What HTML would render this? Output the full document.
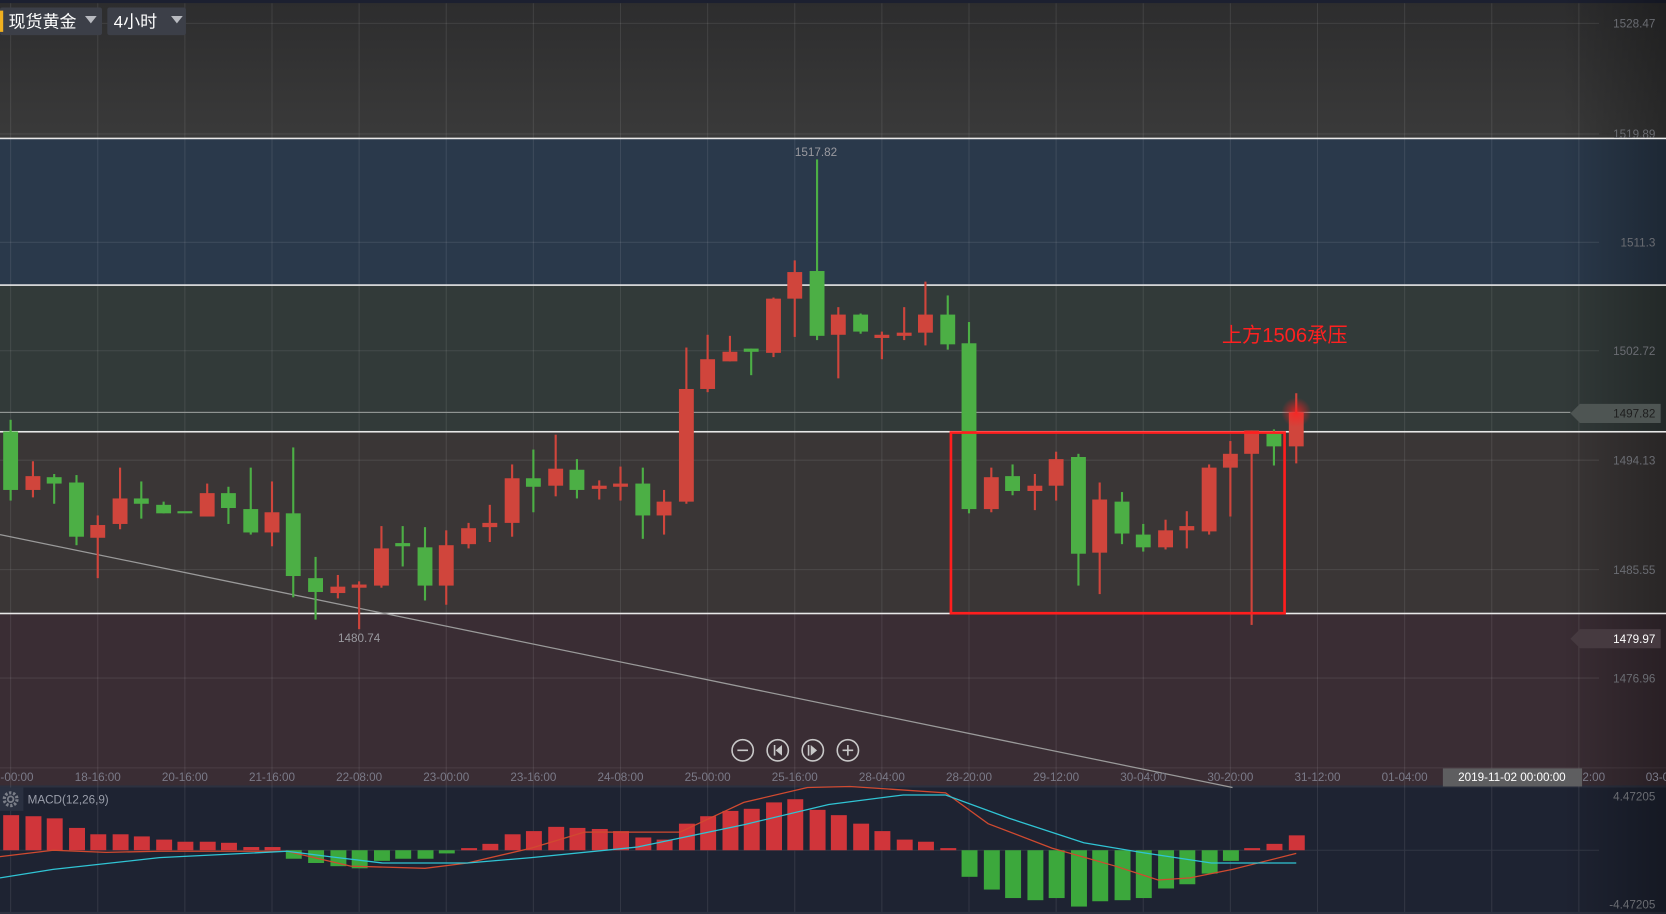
<!DOCTYPE html>
<html><head><meta charset="utf-8"><style>
html,body{margin:0;padding:0;background:#2c2c2c;width:1666px;height:914px;overflow:hidden}
svg{display:block}
text{font-family:"Liberation Sans","Noto Sans CJK SC",sans-serif}
</style></head><body>
<svg width="1666" height="914" viewBox="0 0 1568 860" preserveAspectRatio="none" xmlns="http://www.w3.org/2000/svg">
<defs>
<linearGradient id="topg" x1="0" y1="0" x2="0" y2="1"><stop offset="0" stop-color="#2d2d2e"/><stop offset="1" stop-color="#3a3a3a"/></linearGradient>
<linearGradient id="rdark" x1="0" y1="0" x2="1" y2="0"><stop offset="0" stop-color="#000" stop-opacity="0"/><stop offset="1" stop-color="#000" stop-opacity="0.3"/></linearGradient>
<radialGradient id="glow"><stop offset="0" stop-color="#ff2020" stop-opacity="0.8"/><stop offset="1" stop-color="#ff2020" stop-opacity="0"/></radialGradient>
</defs>
<rect x="0" y="0" width="1568" height="3" fill="#1c2030"/>
<rect x="0" y="3" width="1568" height="127" fill="url(#topg)"/>
<rect x="0" y="130" width="1568" height="138" fill="#2a394b"/>
<rect x="0" y="268" width="1568" height="138" fill="#323a39"/>
<rect x="0" y="406" width="1568" height="171" fill="#3a3636"/>
<rect x="0" y="577" width="1568" height="163" fill="#3a2d34"/>
<rect x="0" y="740" width="1568" height="120" fill="#1e2332"/>
<rect x="0" y="722" width="1568" height="1" fill="#4a3c44"/>
<rect x="0" y="739" width="1568" height="2" fill="#2c3140"/>
<rect x="0" y="858" width="1568" height="2" fill="#2c3140"/>
<rect x="1470" y="0" width="98" height="860" fill="url(#rdark)"/>
<!-- grid -->
<g stroke="#ffffff" stroke-opacity="0.09" stroke-width="1">
<path d="M0 22H1505M0 126H1505M0 228H1505M0 330H1505M0 433H1505M0 536H1505M0 638H1505"/>
<path d="M10 3V740M92 3V740M174 3V740M256 3V740M338 3V740M420 3V740M502 3V740M584 3V740M666 3V740M748 3V740M830 3V740M912 3V740M994 3V740M1076 3V740M1158 3V740M1240 3V740M1322 3V740M1404 3V740M1486 3V740"/>
<path d="M10 740V858M92 740V858M174 740V858M256 740V858M338 740V858M420 740V858M502 740V858M584 740V858M666 740V858M748 740V858M830 740V858M912 740V858M994 740V858M1076 740V858M1158 740V858M1240 740V858M1322 740V858M1404 740V858M1486 740V858M0 800H1505"/>
</g>
<!-- level lines -->
<g fill="#e8e8e8"><rect x="0" y="129.5" width="1568" height="1.5"/><rect x="0" y="267.5" width="1568" height="1.5"/><rect x="0" y="405.5" width="1568" height="1.5"/><rect x="0" y="576.5" width="1568" height="1.5"/></g>
<rect x="0" y="387.5" width="1478" height="1" fill="#9a9e9c"/>
<line x1="0" y1="503" x2="1160" y2="741" stroke="#9a9a9a" stroke-width="1.2"/>
<!-- candles -->
<g id="c">
<g fill="#4caf45">
<rect x="9" y="395" width="2" height="76"/><rect x="3" y="406" width="14" height="55"/>
<rect x="50" y="446" width="2" height="28"/><rect x="44" y="449" width="14" height="6"/>
<rect x="71" y="447" width="2" height="66"/><rect x="65" y="454" width="14" height="51"/>
<rect x="132" y="453" width="2" height="35"/><rect x="126" y="469" width="14" height="5"/>
<rect x="153" y="472" width="2" height="11"/><rect x="147" y="475" width="14" height="8"/>
<rect x="167" y="481" width="14" height="2"/>
<rect x="214" y="458" width="2" height="35"/><rect x="208" y="464" width="14" height="14"/>
<rect x="235" y="440" width="2" height="63"/><rect x="229" y="479" width="14" height="22"/>
<rect x="275" y="421" width="2" height="141"/><rect x="269" y="483" width="14" height="59"/>
<rect x="296" y="524" width="2" height="59"/><rect x="290" y="544" width="14" height="13"/>
<rect x="378" y="495" width="2" height="38"/><rect x="372" y="511" width="14" height="3"/>
<rect x="399" y="496" width="2" height="69"/><rect x="393" y="515" width="14" height="36"/>
<rect x="501" y="423" width="2" height="59"/><rect x="495" y="450" width="14" height="8"/>
<rect x="542" y="432" width="2" height="37"/><rect x="536" y="442" width="14" height="19"/>
<rect x="604" y="440" width="2" height="67"/><rect x="598" y="455" width="14" height="30"/>
<rect x="706" y="328" width="2" height="25"/><rect x="700" y="328" width="14" height="3"/>
<rect x="768" y="150" width="2" height="170"/><rect x="762" y="255" width="14" height="61"/>
<rect x="809" y="295" width="2" height="19"/><rect x="803" y="296" width="14" height="16"/>
<rect x="891" y="278" width="2" height="51"/><rect x="885" y="296" width="14" height="28"/>
<rect x="911" y="303" width="2" height="180"/><rect x="905" y="323" width="14" height="156"/>
<rect x="952" y="437" width="2" height="29"/><rect x="946" y="448" width="14" height="14"/>
<rect x="1014" y="427" width="2" height="124"/><rect x="1008" y="430" width="14" height="91"/>
<rect x="1055" y="463" width="2" height="49"/><rect x="1049" y="472" width="14" height="30"/>
<rect x="1075" y="493" width="2" height="26"/><rect x="1069" y="503" width="14" height="12"/>
<rect x="1198" y="404" width="2" height="34"/><rect x="1192" y="408" width="14" height="12"/>
</g>
<g fill="#d0453c">
<rect x="30" y="434" width="2" height="34"/><rect x="24" y="448" width="14" height="13"/>
<rect x="91" y="485" width="2" height="59"/><rect x="85" y="494" width="14" height="12"/>
<rect x="112" y="440" width="2" height="58"/><rect x="106" y="469" width="14" height="24"/>
<rect x="194" y="455" width="2" height="31"/><rect x="188" y="464" width="14" height="22"/>
<rect x="255" y="453" width="2" height="61"/><rect x="249" y="482" width="14" height="19"/>
<rect x="317" y="541" width="2" height="22"/><rect x="311" y="552" width="14" height="6"/>
<rect x="337" y="547" width="2" height="45"/><rect x="331" y="550" width="14" height="3"/>
<rect x="358" y="495" width="2" height="58"/><rect x="352" y="516" width="14" height="35"/>
<rect x="419" y="499" width="2" height="70"/><rect x="413" y="513" width="14" height="38"/>
<rect x="440" y="492" width="2" height="24"/><rect x="434" y="497" width="14" height="15"/>
<rect x="460" y="475" width="2" height="35"/><rect x="454" y="492" width="14" height="4"/>
<rect x="481" y="437" width="2" height="68"/><rect x="475" y="450" width="14" height="42"/>
<rect x="522" y="409" width="2" height="58"/><rect x="516" y="441" width="14" height="16"/>
<rect x="563" y="452" width="2" height="18"/><rect x="557" y="457" width="14" height="3"/>
<rect x="583" y="439" width="2" height="32"/><rect x="577" y="455" width="14" height="3"/>
<rect x="624" y="461" width="2" height="42"/><rect x="618" y="472" width="14" height="13"/>
<rect x="645" y="327" width="2" height="147"/><rect x="639" y="366" width="14" height="106"/>
<rect x="665" y="315" width="2" height="54"/><rect x="659" y="338" width="14" height="28"/>
<rect x="686" y="316" width="2" height="24"/><rect x="680" y="331" width="14" height="9"/>
<rect x="727" y="280" width="2" height="56"/><rect x="721" y="281" width="14" height="51"/>
<rect x="747" y="245" width="2" height="72"/><rect x="741" y="256" width="14" height="25"/>
<rect x="788" y="289" width="2" height="67"/><rect x="782" y="296" width="14" height="19"/>
<rect x="829" y="312" width="2" height="26"/><rect x="823" y="315" width="14" height="3"/>
<rect x="850" y="289" width="2" height="31"/><rect x="844" y="313" width="14" height="3"/>
<rect x="870" y="265" width="2" height="60"/><rect x="864" y="296" width="14" height="17"/>
<rect x="932" y="440" width="2" height="42"/><rect x="926" y="449" width="14" height="30"/>
<rect x="973" y="446" width="2" height="34"/><rect x="967" y="457" width="14" height="5"/>
<rect x="993" y="425" width="2" height="46"/><rect x="987" y="432" width="14" height="25"/>
<rect x="1034" y="454" width="2" height="105"/><rect x="1028" y="470" width="14" height="50"/>
<rect x="1096" y="489" width="2" height="28"/><rect x="1090" y="499" width="14" height="16"/>
<rect x="1116" y="481" width="2" height="35"/><rect x="1110" y="495" width="14" height="4"/>
<rect x="1137" y="437" width="2" height="66"/><rect x="1131" y="440" width="14" height="60"/>
<rect x="1157" y="415" width="2" height="71"/><rect x="1151" y="427" width="14" height="13"/>
<rect x="1177" y="405" width="2" height="183"/><rect x="1171" y="405" width="14" height="22"/>
<rect x="1219" y="370" width="2" height="66"/><rect x="1213" y="388" width="14" height="32"/>
</g>
</g>
<circle cx="1220" cy="388" r="14" fill="url(#glow)"/>
<rect x="895" y="407" width="314" height="170" fill="none" stroke="#ff1e1e" stroke-width="2.5"/>
<text x="1150" y="322" font-size="19" fill="#ff2020">上方1506承压</text>
<text x="768" y="147" font-size="11" fill="#9a9aa0" text-anchor="middle">1517.82</text>
<text x="338" y="604" font-size="11" fill="#9a9aa0" text-anchor="middle">1480.74</text>
<!-- right axis -->
<g font-size="11" fill="#6a6c72" text-anchor="end">
<text x="1558" y="26">1528.47</text><text x="1558" y="130">1519.89</text><text x="1558" y="232">1511.3</text><text x="1558" y="334">1502.72</text><text x="1558" y="437">1494.13</text><text x="1558" y="540">1485.55</text><text x="1558" y="642">1476.96</text>
<text x="1558" y="753">4.47205</text><text x="1558" y="855">-4.47205</text>
</g>
<polygon points="1478,389 1487,380 1563,380 1563,398 1487,398" fill="#4e5553"/>
<text x="1558" y="393" font-size="11" fill="#1e1e1e" text-anchor="end">1497.82</text>
<polygon points="1478,601 1487,592 1563,592 1563,610 1487,610" fill="#463a40"/>
<text x="1558" y="605" font-size="11" fill="#ffffff" text-anchor="end">1479.97</text>
<!-- nav buttons -->
<g fill="none" stroke="#c8c8c8" stroke-width="1.5">
<circle cx="699" cy="706" r="10"/><circle cx="732" cy="706" r="10"/><circle cx="765" cy="706" r="10"/><circle cx="798" cy="706" r="10"/>
<path d="M694 706H704M793 706H803M798 701V711M729 701V711M761 701V711"/>
</g>
<g fill="#c8c8c8"><path d="M736 701L730 706L736 711Z"/><path d="M763 701L769 706L763 711Z"/></g>
<!-- time axis -->
<g font-size="11" fill="#7a7a88" text-anchor="middle">
<text x="16" y="735">-00:00</text><text x="92" y="735">18-16:00</text><text x="174" y="735">20-16:00</text><text x="256" y="735">21-16:00</text><text x="338" y="735">22-08:00</text><text x="420" y="735">23-00:00</text><text x="502" y="735">23-16:00</text><text x="584" y="735">24-08:00</text><text x="666" y="735">25-00:00</text><text x="748" y="735">25-16:00</text><text x="830" y="735">28-04:00</text><text x="912" y="735">28-20:00</text><text x="994" y="735">29-12:00</text><text x="1076" y="735">30-04:00</text><text x="1158" y="735">30-20:00</text><text x="1240" y="735">31-12:00</text><text x="1322" y="735">01-04:00</text><text x="1500" y="735">2:00</text><text x="1560" y="735">03-0</text>
</g>
<rect x="1358" y="723" width="131" height="17" fill="#5e5e60"/>
<text x="1423" y="735" font-size="11" fill="#ffffff" text-anchor="middle">2019-11-02 00:00:00</text>
<!-- MACD bars -->
<g fill="#d0353a">
<rect x="3" y="767" width="15" height="33"/><rect x="24" y="768" width="15" height="32"/><rect x="44" y="770" width="15" height="30"/><rect x="65" y="779" width="15" height="21"/><rect x="85" y="785" width="15" height="15"/><rect x="106" y="785" width="15" height="15"/><rect x="126" y="787" width="15" height="13"/><rect x="147" y="790" width="15" height="10"/><rect x="167" y="792" width="15" height="8"/><rect x="188" y="792" width="15" height="8"/><rect x="208" y="793" width="15" height="7"/><rect x="229" y="797" width="15" height="3"/><rect x="249" y="797" width="15" height="3"/>
<rect x="434" y="798" width="15" height="2"/><rect x="454" y="794" width="15" height="6"/><rect x="475" y="785" width="15" height="15"/><rect x="495" y="782" width="15" height="18"/><rect x="516" y="778" width="15" height="22"/><rect x="536" y="779" width="15" height="21"/><rect x="557" y="780" width="15" height="20"/><rect x="577" y="782" width="15" height="18"/><rect x="598" y="788" width="15" height="12"/><rect x="618" y="790" width="15" height="10"/><rect x="639" y="775" width="15" height="25"/><rect x="659" y="768" width="15" height="32"/><rect x="680" y="763" width="15" height="37"/><rect x="700" y="761" width="15" height="39"/><rect x="721" y="755" width="15" height="45"/><rect x="741" y="752" width="15" height="48"/><rect x="762" y="762" width="15" height="38"/><rect x="782" y="767" width="15" height="33"/><rect x="803" y="775" width="15" height="25"/><rect x="823" y="782" width="15" height="18"/><rect x="844" y="790" width="15" height="10"/><rect x="864" y="792" width="15" height="8"/><rect x="885" y="798" width="15" height="2"/>
<rect x="1171" y="798" width="15" height="2"/><rect x="1192" y="794" width="15" height="6"/><rect x="1213" y="786" width="15" height="14"/>
</g>
<g fill="#3ca83c">
<rect x="269" y="800" width="15" height="8"/><rect x="290" y="800" width="15" height="12"/><rect x="311" y="800" width="15" height="15"/><rect x="331" y="800" width="15" height="17"/><rect x="352" y="800" width="15" height="10"/><rect x="372" y="800" width="15" height="8"/><rect x="393" y="800" width="15" height="8"/><rect x="413" y="800" width="15" height="3"/>
<rect x="905" y="800" width="15" height="25"/><rect x="926" y="800" width="15" height="37"/><rect x="946" y="800" width="15" height="45"/><rect x="967" y="800" width="15" height="47"/><rect x="987" y="800" width="15" height="45"/><rect x="1008" y="800" width="15" height="53"/><rect x="1028" y="800" width="15" height="48"/><rect x="1049" y="800" width="15" height="47"/><rect x="1069" y="800" width="15" height="45"/><rect x="1090" y="800" width="15" height="36"/><rect x="1110" y="800" width="15" height="32"/><rect x="1131" y="800" width="15" height="22"/><rect x="1151" y="800" width="15" height="10"/>
</g>
<polyline fill="none" stroke="#d04a30" stroke-width="1.2" points="0,806 50,800 100,802 150,801 270,801 330,815 400,817 440,812 500,798 550,783 600,783 640,783 700,755 760,741 800,740 890,746 930,775 990,798 1050,815 1090,828 1120,826 1160,818 1220,803"/>
<polyline fill="none" stroke="#30c4d4" stroke-width="1.2" points="0,826 50,818 150,807 270,801 310,806 360,812 440,812 500,807 600,797 700,776 780,757 850,748 890,748 950,770 1020,793 1080,803 1140,812 1220,812"/>
<!-- MACD label -->
<rect x="0" y="741" width="22" height="22" fill="#2a3040"/>
<circle cx="10" cy="752" r="6" fill="none" stroke="#7a7e88" stroke-width="3" stroke-dasharray="2.2 1.6"/>
<circle cx="10" cy="752" r="3.5" fill="#7a7e88"/><circle cx="10" cy="752" r="1.8" fill="#2a3040"/>
<text x="26" y="756" font-size="11" fill="#9a9eaa">MACD(12,26,9)</text>
<!-- top controls -->
<rect x="0" y="7" width="96" height="26" rx="2" fill="#3c3f48"/>
<rect x="0" y="10" width="3" height="20" fill="#f0b020"/>
<text x="8" y="26" font-size="16" fill="#ffffff">现货黄金</text>
<path d="M80 15H91L85.5 22Z" fill="#b8bac0"/>
<rect x="101" y="7" width="74" height="26" rx="2" fill="#3c3f48"/>
<text x="107" y="26" font-size="16" fill="#ffffff">4小时</text>
<path d="M161 15H172L166.5 22Z" fill="#b8bac0"/>
</svg>
</body></html>
